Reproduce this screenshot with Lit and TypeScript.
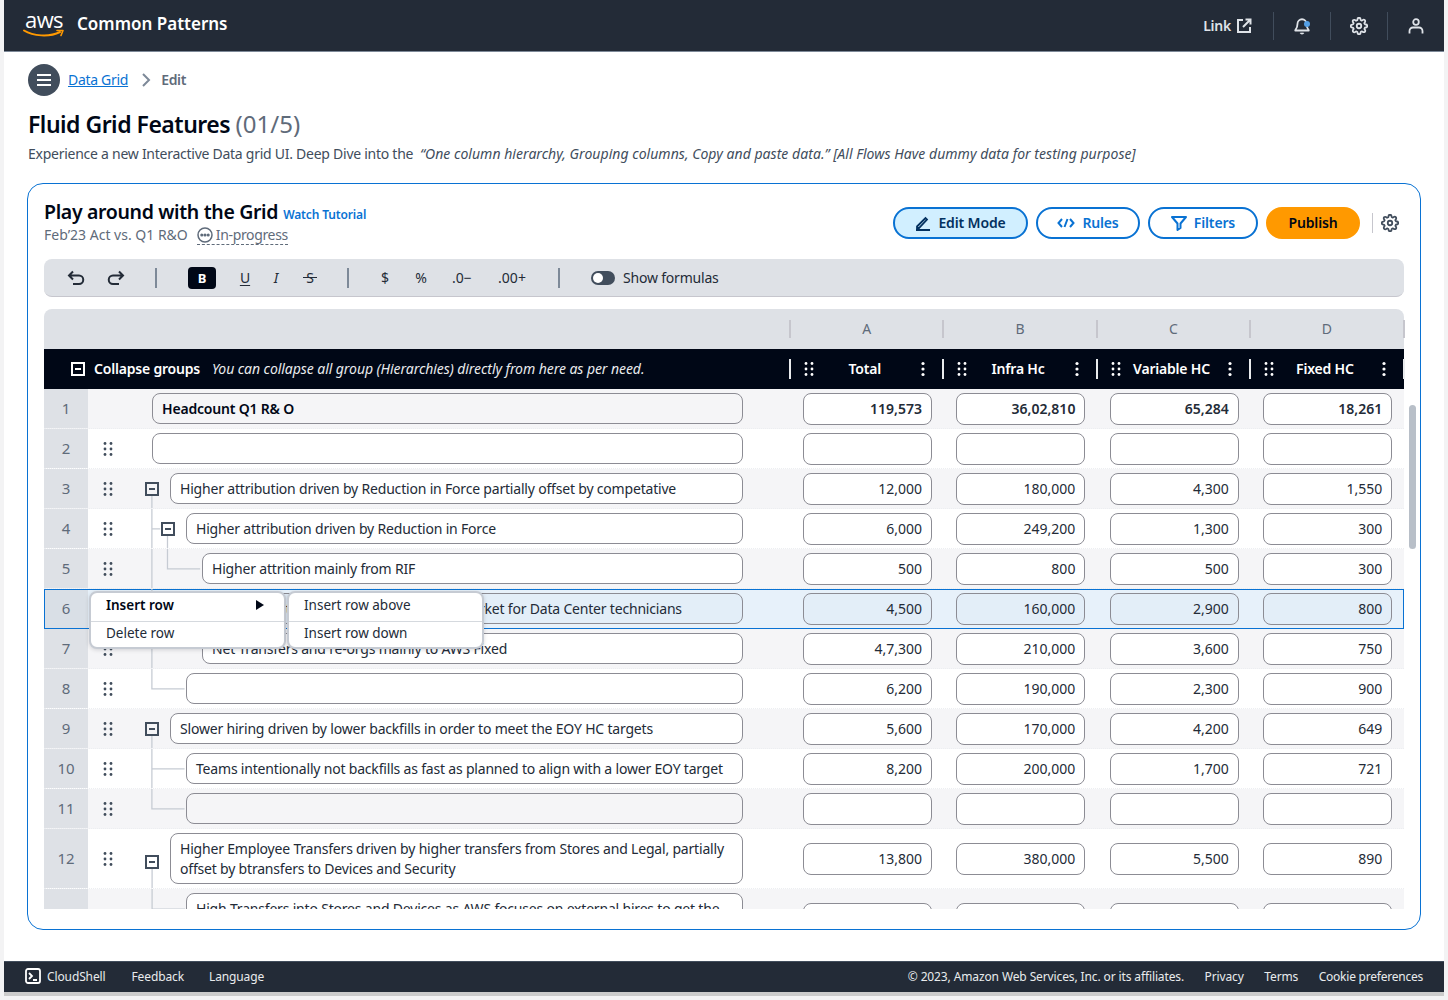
import { LitElement, html, css, svg } from "lit";
import { customElement } from "lit/decorators.js";

type Row = {
  n: number; h?: number; lvl: number; text?: string; minus?: boolean; minusY?: number;
  vals: string[]; bold?: boolean; nodrag?: boolean; sel?: boolean; alt?: boolean; fill?: boolean; tree?: string;
};

const rows: Row[] = [
  { n: 1, lvl: 152, text: "Headcount Q1 R& O", vals: ["119,573", "36,02,810", "65,284", "18,261"], bold: true, nodrag: true, alt: true, fill: true },
  { n: 2, lvl: 152, text: "", vals: ["", "", "", ""] },
  { n: 3, lvl: 170, minus: true, text: "Higher attribution driven by Reduction in Force partially offset by competative", vals: ["12,000", "180,000", "4,300", "1,550"], alt: true, tree: "M24.5 27V40" },
  { n: 4, lvl: 186, minus: true, text: "Higher attribution driven by Reduction in Force", vals: ["6,000", "249,200", "1,300", "300"], tree: "M24.5 0V40M24.5 20.5H33M40.5 27V40" },
  { n: 5, lvl: 202, text: "Higher attrition mainly from RIF", vals: ["500", "800", "500", "300"], alt: true, tree: "M24.5 0V40M40.5 0V20.5H74" },
  { n: 6, lvl: 202, text: "Higher attritions due to a\u00a0 competitive market for Data Center technicians", vals: ["4,500", "160,000", "2,900", "800"], sel: true, tree: "M24.5 0V40" },
  { n: 7, lvl: 202, text: "Net Transfers and re-orgs mainly to AWS Fixed", vals: ["4,7,300", "210,000", "3,600", "750"], alt: true, tree: "M24.5 0V40" },
  { n: 8, lvl: 186, text: "", vals: ["6,200", "190,000", "2,300", "900"], tree: "M24.5 0V20.5H58" },
  { n: 9, lvl: 170, minus: true, text: "Slower hiring driven by lower backfills in order to meet the EOY HC targets", vals: ["5,600", "170,000", "4,200", "649"], alt: true, tree: "M24.5 27V40" },
  { n: 10, lvl: 186, text: "Teams intentionally not backfills as fast as planned to align with a lower EOY target", vals: ["8,200", "200,000", "1,700", "721"], tree: "M24.5 0V40M24.5 20.5H58" },
  { n: 11, lvl: 186, text: "", vals: ["", "", "", ""], alt: true, fill: true, tree: "M24.5 0V20.5H58" },
  { n: 12, h: 60, lvl: 170, minus: true, minusY: 33, text: "Higher Employee Transfers driven by higher transfers from Stores and Legal, partially offset by btransfers to Devices and Security", vals: ["13,800", "380,000", "5,500", "890"], tree: "M24.5 40V60" },
  { n: 13, h: 60, lvl: 186, text: "High Transfers into Stores and Devices as AWS focuses on external hires to get the right talent in place", vals: ["", "", "", ""], alt: true, tree: "M24.5 0V60M24.5 20.5H58" },
];

const gearPath = "M19.4 15a1.65 1.65 0 0 0 .33 1.82l.06.06a2 2 0 0 1 0 2.83 2 2 0 0 1-2.83 0l-.06-.06a1.65 1.65 0 0 0-1.82-.33 1.65 1.65 0 0 0-1 1.51V21a2 2 0 0 1-2 2 2 2 0 0 1-2-2v-.09A1.65 1.65 0 0 0 9 19.4a1.65 1.65 0 0 0-1.82.33l-.06.06a2 2 0 0 1-2.83 0 2 2 0 0 1 0-2.83l.06-.06a1.65 1.65 0 0 0 .33-1.82 1.65 1.65 0 0 0-1.51-1H3a2 2 0 0 1-2-2 2 2 0 0 1 2-2h.09A1.65 1.65 0 0 0 4.6 9a1.65 1.65 0 0 0-.33-1.82l-.06-.06a2 2 0 0 1 0-2.83 2 2 0 0 1 2.83 0l.06.06a1.65 1.65 0 0 0 1.82.33H9a1.65 1.65 0 0 0 1-1.51V3a2 2 0 0 1 2-2 2 2 0 0 1 2 2v.09a1.65 1.65 0 0 0 1 1.51 1.65 1.65 0 0 0 1.82-.33l.06-.06a2 2 0 0 1 2.83 0 2 2 0 0 1 0 2.83l-.06.06a1.65 1.65 0 0 0-.33 1.82V9a1.65 1.65 0 0 0 1.51 1H21a2 2 0 0 1 2 2 2 2 0 0 1-2 2h-.09a1.65 1.65 0 0 0-1.51 1z";

const gear = () => svg`<svg width="18" height="18" viewBox="0 0 24 24" fill="none" stroke="currentColor" stroke-width="2.4" stroke-linejoin="round"><circle cx="12" cy="12" r="3"/><path d=${gearPath}/></svg>`;

const dots = () => svg`<svg class="drag" width="10" height="16" viewBox="0 0 10 16" fill="currentColor"><circle cx="2" cy="2.5" r="1.4"/><circle cx="8" cy="2.5" r="1.4"/><circle cx="2" cy="8" r="1.4"/><circle cx="8" cy="8" r="1.4"/><circle cx="2" cy="13.5" r="1.4"/><circle cx="8" cy="13.5" r="1.4"/></svg>`;

const kebab = () => svg`<svg width="4" height="16" viewBox="0 0 4 16" fill="currentColor"><circle cx="2" cy="2.5" r="1.6"/><circle cx="2" cy="8" r="1.6"/><circle cx="2" cy="13.5" r="1.6"/></svg>`;

const minusBox = () => svg`<svg width="14" height="14" viewBox="0 0 14 14" fill="none" stroke="currentColor" stroke-width="2"><rect x="1" y="1" width="12" height="12"/><path d="M4 7h6"/></svg>`;

@customElement("app-root")
export class AppRoot extends LitElement {
  static styles = css`
    :host { display: block; width: 1448px; height: 1000px; overflow: hidden; background: #f3f3f4; font-family: "Noto Sans", "Open Sans", sans-serif; font-size: 14px; color: #000716; }
    * { box-sizing: border-box; }
    svg { display: block; flex: none; }
    .shell { margin: 0 4px; width: 1440px; height: 1000px; display: flex; flex-direction: column; }
    .top { height: 52px; flex: none; background: #232b37; border-bottom: 1px solid #7d8998; display: flex; align-items: center; color: #fff; padding-left: 19px; }
    .logo { width: 42px; height: 30px; position: relative; margin-right: 12px; }
    .logo span { display: block; font-family: "Open Sans", sans-serif; font-size: 22px; line-height: 22px; letter-spacing: -0.6px; color: #fff; text-align: center; margin-top: -3px; }
    .logo svg { margin-top: -1px; }
    .brand { font-size: 17px; font-weight: 600; margin-top: -4px; }
    .top-right { margin-left: auto; display: flex; align-items: center; color: #dfe3e8; height: 28px; }
    .top-link { display: flex; align-items: center; gap: 5px; font-weight: 600; font-size: 14px; padding-right: 21px; letter-spacing: -0.25px; }
    .top-ic { width: 57px; height: 28px; border-left: 1px solid #414d5c; display: flex; align-items: center; justify-content: center; position: relative; }
    .dot { position: absolute; left: 30px; top: 9px; width: 6px; height: 6px; border-radius: 50%; background: #539fe5; }

    .main { flex: 1; background: #fff; padding: 12px 23px 0 24px; display: flex; flex-direction: column; min-height: 0; }
    .crumbs { display: flex; align-items: center; height: 32px; letter-spacing: -0.3px; }
    .burger { width: 32px; height: 32px; border-radius: 50%; background: #414d5c; display: flex; align-items: center; justify-content: center; }
    .crumbs a { margin-left: 8px; color: #0972d3; text-decoration: underline; font-size: 14px; padding-bottom: 2px; }
    .chev { margin: 0 9px 0 12px; color: #7d8998; }
    .crumb-cur { font-weight: 600; color: #5f6b7a; padding-bottom: 2px; }
    h1 { margin: 11px 0 0; font-size: 23px; line-height: 34px; font-weight: 600; letter-spacing: -0.5px; }
    h1 span { font-weight: 400; color: #5f6b7a; font-size: 24px; letter-spacing: 0; }
    .desc { margin-top: 3px; line-height: 20px; color: #414d5c; font-size: 14px; white-space: pre; letter-spacing: -0.26px; }
    .desc i { font-style: italic; letter-spacing: 0.04px; }

    .card { margin-top: 19px; margin-left: -1px; width: 1394px; height: 747px; border: 1px solid #0972d3; border-radius: 16px; padding: 0 16px; }
    .card-head { display: flex; height: 75px; }
    .titles { padding-top: 16px; }
    .t1 { display: flex; align-items: baseline; gap: 5px; font-size: 19.5px; font-weight: 600; line-height: 24px; letter-spacing: -0.34px; }
    .t1 a { font-size: 12px; color: #0972d3; font-weight: 600; line-height: 1; letter-spacing: -0.15px; }
    .t2 { display: flex; align-items: center; margin-top: 1px; color: #5f6b7a; font-size: 14px; line-height: 20px; }
    .status { display: flex; align-items: center; gap: 3px; margin-left: 9px; border-bottom: 1px dashed #5f6b7a; height: 20px; letter-spacing: -0.35px; }
    .actions { margin-left: auto; display: flex; align-items: flex-start; padding-top: 23px; padding-right: 5px; }
    .btn { height: 32px; border-radius: 16px; border: 2px solid #0972d3; background: #fff; color: #0972d3; font-weight: 600; font-size: 14px; display: flex; align-items: center; justify-content: center; gap: 7px; margin-right: 8px; letter-spacing: -0.15px; padding-bottom: 1px; }
    .btn svg { margin-top: 1px; }
    .btn.edit { width: 135px; background: #d1efff; color: #033160; }
    .btn.rules { width: 104px; }
    .btn.filters { width: 110px; }
    .btn.pub { width: 94px; background: #ff9900; border-color: #ff9900; color: #000716; margin-right: 0; }
    .vsep { width: 1px; height: 20px; background: #c6c6cd; margin: 6px 8px 0 12px; }
    .gear { margin-top: 7px; color: #414d5c; }

    .toolbar { height: 38px; background: #dee1e6; border-bottom: 1px solid #c6c6cd; border-radius: 8px; display: flex; align-items: center; padding-left: 12px; color: #000716; }
    .tb { height: 22px; display: flex; align-items: center; justify-content: center; font-size: 14px; color: #232b37; }
    .tb.w40 { width: 40px; }
    .sep { width: 2px; height: 20px; background: #7d8998; }
    .bold { width: 28px; height: 22px; background: #000716; color: #fff; border-radius: 4px; font-weight: 700; font-size: 13px; }
    .u { text-decoration: underline; text-underline-offset: 2px; }
    .strike { position: relative; }
    .strike::after { content: ""; position: absolute; left: 7px; right: 7px; top: 10px; height: 1.5px; background: #232b37; }
    .toggle { width: 24px; height: 14px; border-radius: 7px; background: #414d5c; position: relative; margin-left: 31px; }
    .toggle::after { content: ""; position: absolute; left: 2px; top: 2px; width: 10px; height: 10px; border-radius: 50%; background: #fff; }
    .tog-label { margin-left: 8px; color: #232b37; letter-spacing: -0.2px; }

    .grid { position: relative; margin-top: 12px; height: 600px; width: 1360px; }
    .letters { height: 40px; background: #dee1e6; border-radius: 8px 8px 0 0; display: grid; grid-template-columns: 745px repeat(4, 153.4px) 1fr; }
    .letter { display: flex; align-items: center; justify-content: center; color: #5f6b7a; position: relative; font-size: 14px; padding: 0 0 2px 2px; }
    .letter::before { content: ""; position: absolute; left: 0; top: 11px; height: 18px; width: 2px; background: #c6c6cd; }
    .heads { height: 40px; background: #000716; color: #fff; display: grid; grid-template-columns: 745px repeat(4, 153.4px) 1fr; font-weight: 600; }
    .collapse { display: flex; align-items: center; padding: 0 0 2px 27px; gap: 9px; letter-spacing: -0.2px; }
    .collapse-ic { color: #fff; margin-top: 2px; }
    .collapse i { font-weight: 400; color: #e9ebed; margin-left: 3px; letter-spacing: -0.06px; }
    .head { display: flex; align-items: center; position: relative; padding: 0 17px 0 15px; letter-spacing: -0.2px; }
    .head::before { content: ""; position: absolute; left: 0; top: 10px; height: 20px; width: 2px; background: #e9ebed; }
    .head.end { padding: 0; }
    .head .lbl { flex: 1; text-align: center; margin-left: -6px; padding-bottom: 2px; }
    .body { height: 520px; overflow: hidden; }
    .row { display: grid; grid-template-columns: 44px 40px 661px repeat(4, 153.4px) 1fr; height: 40px; position: relative; border-bottom: 1px dotted #eceef1; }
    .row.tall { height: 60px; }
    .row.alt { background: #f5f5f7; }
    .row.sel { background: #e7f1fa; outline: 1px solid #0972d3; outline-offset: -1px; z-index: 1; }
    .idx { background: #dee1e6; display: flex; align-items: center; justify-content: center; color: #5f6b7a; font-size: 15px; padding-bottom: 2px; }
    .sel .idx { background: #d9dfe6; }
    .dcell { display: flex; align-items: center; justify-content: center; color: #414d5c; }
    .tree { position: relative; height: 100%; }
    .lines { position: absolute; left: 0; top: 0; width: 100px; height: 100%; color: #c6cbd3; }
    .mb { position: absolute; color: #414d5c; }
    .field { position: absolute; right: 46px; top: 4px; bottom: 4px; border: 1px solid #8c8c94; border-radius: 8px; background: #fff; padding: 0 9px; display: flex; align-items: center; color: #232b37; line-height: 20px; letter-spacing: -0.19px; }
    .bolded { font-weight: 600; color: #000716; }
    .filled { background: transparent; }
    .sel .field, .sel .num { background: #e3eef8; }
    .cellwrap { display: flex; align-items: center; padding-left: 14px; }
    .num { width: 129px; height: 32px; border: 1px solid #8c8c94; border-radius: 8px; background: #fff; display: flex; align-items: center; justify-content: flex-end; padding-right: 9px; color: #232b37; }
    .scroll { position: absolute; left: 1365px; top: 96px; width: 7px; height: 144px; border-radius: 4px; background: #b8bfc8; }
    .menu { position: absolute; top: 282px; width: 197px; height: 58px; background: #fff; border: 2px solid #c6cbd3; border-radius: 8px; z-index: 3; box-shadow: 0 1px 4px rgba(0,7,22,.15); display: flex; flex-direction: column; color: #232b37; font-size: 13.5px; }
    .menu.m1 { left: 45px; }
    .menu.m2 { left: 243px; }
    .mi { flex: 1; display: flex; align-items: center; padding: 0 0 2px 15px; }
    .mi.first { padding-bottom: 4px; }
    .mi + .mi { border-top: 1px solid #d5d9de; }
    .mi.b { font-weight: 600; color: #000716; justify-content: space-between; padding-right: 20px; }
    .tri { width: 0; height: 0; border-left: 8px solid #000716; border-top: 5px solid transparent; border-bottom: 5px solid transparent; }

    .foot { height: 31px; flex: none; background: #232b37; border-top: 1px solid #414d5c; color: #e9ebed; font-size: 12px; display: flex; align-items: center; padding: 0 21px 2px; letter-spacing: -0.12px; }
    .foot .cs { display: flex; align-items: center; gap: 6px; margin-right: 26px; }
    .foot .l { margin-right: 25px; }
    .foot .r { margin-left: auto; display: flex; gap: 20.5px; }
    .foot .ck { letter-spacing: -0.23px; }
    .strip { height: 4px; flex: none; background: #cbcbcb; }
    .strip2 { flex: 1; background: #f3f3f4; }
    .foot-wrap { display: flex; flex-direction: column; height: 39px; flex: none; }
  `;

  renderRow(r: Row) {
    const cls = `row ${r.alt ? "alt" : ""} ${r.sel ? "sel" : ""} ${r.h ? "tall" : ""}`;
    return html`<div class=${cls}>
      <div class="idx">${r.n}</div>
      <div class="dcell">${r.nodrag ? "" : dots()}</div>
      <div class="tree">
        ${r.tree ? svg`<svg class="lines" viewBox="0 0 100 ${r.h ?? 40}" preserveAspectRatio="xMinYMin meet" fill="none" stroke="currentColor" stroke-width="1.3"><path d=${r.tree}/></svg>` : ""}
        ${r.minus ? html`<div class="mb" style="left:${r.lvl - 128 - 25}px;top:${(r.minusY ?? 20) - 7}px">${minusBox()}</div>` : ""}
        <div class="field ${r.bold ? "bolded" : ""} ${r.fill ? "filled" : ""}" style="left:${r.lvl - 128}px">${r.text}</div>
      </div>
      ${r.vals.map((v) => html`<div class="cellwrap"><div class="num ${r.bold ? "bolded" : ""}">${v}</div></div>`)}
    </div>`;
  }

  render() {
    const heads = ["Total", "Infra Hc", "Variable HC", "Fixed HC"];
    return html`<div class="shell">
      <div class="top">
        <div class="logo"><span>aws</span>
          <svg width="42" height="9" viewBox="0 0 42 9" fill="none"><path d="M1 1.5C10 7 26 8.5 37 3" stroke="#ff9900" stroke-width="2" stroke-linecap="round"/><path d="M34 1.5h6l-2 5" stroke="#ff9900" stroke-width="1.6" stroke-linecap="round" stroke-linejoin="round"/></svg>
        </div>
        <div class="brand">Common Patterns</div>
        <div class="top-right">
          <div class="top-link">Link
            <svg width="16" height="16" viewBox="0 0 16 16" fill="none" stroke="currentColor" stroke-width="2"><path d="M14 9v5H2V2h5M9.5 1.5H14.5V6.5M14 2L7 9"/></svg>
          </div>
          <div class="top-ic"><svg width="18" height="18" viewBox="0 0 24 24" fill="none" stroke="currentColor" stroke-width="2.4" stroke-linejoin="round"><path d="M18 9A6 6 0 0 0 6 9c0 6-3 8-3 9h18c0-1-3-3-3-9M14 21a2.2 2.2 0 0 1-4 0"/></svg><span class="dot"></span></div>
          <div class="top-ic">${gear()}</div>
          <div class="top-ic"><svg width="16" height="16" viewBox="0 0 16 16" fill="none" stroke="currentColor" stroke-width="1.8"><circle cx="8" cy="4" r="2.8"/><path d="M1.5 15.5V13c0-2 1.6-3.5 3.5-3.5h6c1.900 0 3.500 1.500 3.500 3.500v2.500"/></svg></div>
        </div>
      </div>

      <div class="main">
        <div class="crumbs">
          <div class="burger"><svg width="16" height="14" viewBox="0 0 16 14" stroke="#fff" stroke-width="2"><path d="M1 2h14M1 7h14M1 12h14"/></svg></div>
          <a>Data Grid</a>
          <svg class="chev" width="12" height="16" viewBox="0 0 12 16" fill="none" stroke="currentColor" stroke-width="2"><path d="M3 2l6 6-6 6"/></svg>
          <span class="crumb-cur">Edit</span>
        </div>
        <h1>Fluid Grid Features <span>(01/5)</span></h1>
        <div class="desc">Experience a new Interactive Data grid UI. Deep Dive into the  <i>“One column hierarchy, Grouping columns, Copy and paste data.” [All Flows Have dummy data for testing purpose]</i></div>

        <div class="card">
          <div class="card-head">
            <div class="titles">
              <div class="t1">Play around with the Grid <a>Watch Tutorial</a></div>
              <div class="t2">Feb’23 Act vs. Q1 R&amp;O
                <span class="status"><svg width="16" height="16" viewBox="0 0 16 16" fill="none" stroke="currentColor" stroke-width="1.5"><circle cx="8" cy="8" r="7"/><circle cx="4.800" cy="8" r=".8" fill="currentColor"/><circle cx="8" cy="8" r=".8" fill="currentColor"/><circle cx="11.200" cy="8" r=".8" fill="currentColor"/></svg>In-progress</span>
              </div>
            </div>
            <div class="actions">
              <div class="btn edit"><svg width="16" height="16" viewBox="0 0 16 16" fill="none" stroke="currentColor" stroke-width="2"><path d="M2 11.500L10.500 3l1.500 1.500L4 13H2zM1 15h14" stroke-width="1.800"/></svg>Edit Mode</div>
              <div class="btn rules"><svg width="18" height="12" viewBox="0 0 18 12" fill="none" stroke="currentColor" stroke-width="2"><path d="M5 2L1.500 6 5 10M13 2l3.500 4L13 10M10.500 2l-3 8"/></svg>Rules</div>
              <div class="btn filters"><svg width="16" height="16" viewBox="0 0 16 16" fill="none" stroke="currentColor" stroke-width="2" stroke-linejoin="round"><path d="M1 2h14L9.500 8.500V13L6.500 15V8.500z"/></svg>Filters</div>
              <div class="btn pub">Publish</div>
              <div class="vsep"></div>
              <div class="gear">${gear()}</div>
            </div>
          </div>

          <div class="toolbar">
            <div class="tb w40"><svg width="18" height="16" viewBox="0 0 18 16" fill="none" stroke="currentColor" stroke-width="2"><path d="M6 1.500L2 5.500 6 9.500M2 5.500h10a4 4 0 0 1 0 8.500H6"/></svg></div>
            <div class="tb w40"><svg width="18" height="16" viewBox="0 0 18 16" fill="none" stroke="currentColor" stroke-width="2"><path d="M12 1.500l4 4-4 4M16 5.500H6a4 4 0 0 0 0 8.500h6"/></svg></div>
            <div class="sep" style="margin:0 31px 0 19px"></div>
            <div class="tb bold">B</div>
            <div class="tb u" style="width:28px;margin-left:15px">U</div>
            <div class="tb" style="width:20px;margin-left:7px"><i>I</i></div>
            <div class="tb strike" style="width:28px;margin-left:10px">S</div>
            <div class="sep" style="margin-left:23px"></div>
            <div class="tb" style="width:30px;margin-left:21px">$</div>
            <div class="tb" style="width:30px;margin-left:6px">%</div>
            <div class="tb" style="width:40px;margin-left:6px">.0−</div>
            <div class="tb" style="width:50px;margin-left:5px">.00+</div>
            <div class="sep" style="margin-left:21px"></div>
            <div class="toggle"></div>
            <div class="tog-label">Show formulas</div>
          </div>

          <div class="grid">
            <div class="letters"><div></div>${["A", "B", "C", "D", ""].map((l) => html`<div class="letter">${l}</div>`)}</div>
            <div class="heads">
              <div class="collapse"><span class="collapse-ic">${minusBox()}</span>Collapse groups <i>You can collapse all group (Hierarchies) directly from here as per need.</i></div>
              ${heads.map((h) => html`<div class="head">${dots()}<span class="lbl">${h}</span>${kebab()}</div>`)}
              <div class="head end"></div>
            </div>
            <div class="body">${rows.map((r) => this.renderRow(r))}</div>
            <div class="scroll"></div>
            <div class="menu m1">
              <div class="mi b first">Insert row<span class="tri"></span></div>
              <div class="mi">Delete row</div>
            </div>
            <div class="menu m2">
              <div class="mi first">Insert row above</div>
              <div class="mi">Insert row down</div>
            </div>
          </div>
        </div>
      </div>

      <div class="foot-wrap">
        <div class="foot">
          <div class="cs"><svg width="16" height="16" viewBox="0 0 16 16" fill="none" stroke="#fff" stroke-width="1.800"><rect x="1" y="1" width="14" height="14" rx="2"/><path d="M4 5l3 3-3 3M8 12h4"/></svg>CloudShell</div>
          <div class="l">Feedback</div>
          <div class="l">Language</div>
          <div class="r"><span>© 2023, Amazon Web Services, Inc. or its affiliates.</span><span>Privacy</span><span>Terms</span><span class="ck">Cookie preferences</span></div>
        </div>
        <div class="strip"></div>
        <div class="strip2"></div>
      </div>
    </div>`;
  }
}
